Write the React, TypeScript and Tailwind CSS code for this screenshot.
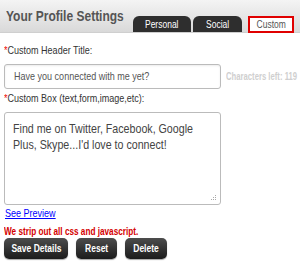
import React from "react";

function N({ children, className = "" }: { children: React.ReactNode; className?: string }) {
  return (
    <span className={"inline-block whitespace-nowrap origin-left scale-x-[0.82] " + className}>
      {children}
    </span>
  );
}

function Btn({ w, label }: { w: string; label: string }) {
  return (
    <div
      className={
        w +
        " h-[21px] rounded-[5px] bg-gradient-to-b from-[#4d4d4d] to-[#1c1c1c] text-white text-[10px] font-bold flex items-center justify-center shadow-[0_1px_1px_rgba(0,0,0,0.35)]"
      }
    >
      <span className="inline-block whitespace-nowrap scale-x-[0.85]">{label}</span>
    </div>
  );
}

export default function App() {
  const font = { fontFamily: '"Liberation Sans", Arial, sans-serif' };
  return (
    <div className="w-[300px] h-[266px] bg-white overflow-hidden" style={font}>
      <div className="h-[33px] bg-gradient-to-b from-[#f4f4f4] to-[#d9d9d9] border-b border-[#cfcfcf] flex items-end pl-[6px]">
        <div className="w-[127px] shrink-0 mb-[8px] leading-none">
          <span className="inline-block whitespace-nowrap origin-left scale-x-[0.8] text-[15px] font-bold text-[#555]">
            Your Profile Settings
          </span>
        </div>
        <div className="flex items-end gap-[2px]">
          <div className="w-[58px] h-[16px] bg-[#2e2e2e] rounded-t-[6px] text-white text-[10px] flex items-center justify-center">
            <span className="inline-block scale-x-[0.85]">Personal</span>
          </div>
          <div className="w-[49px] h-[16px] bg-[#2e2e2e] rounded-t-[6px] text-white text-[10px] flex items-center justify-center">
            <span className="inline-block scale-x-[0.85]">Social</span>
          </div>
          <div className="ml-[4px] w-[46px] h-[17px] -mb-[1px] bg-white border-[2px] border-[#e00000] text-[#555] text-[10px] flex items-center justify-center">
            <span className="inline-block scale-x-[0.85]">Custom</span>
          </div>
        </div>
      </div>

      <div className="pl-[4px]">
        <div className="mt-[11px] text-[11px] text-[#333] leading-[13px]">
          <N>
            <span className="text-[#e00]">*</span>Custom Header Title:
          </N>
        </div>
        <div className="mt-[7px] flex items-center">
          <div className="w-[217px] shrink-0 h-[25px] border border-[#bbb] rounded-[3px] shadow-[inset_0_1px_2px_rgba(0,0,0,0.08)] flex items-center pl-[9px] text-[11px] text-[#555]">
            <N>Have you connected with me yet?</N>
          </div>
          <div className="ml-[5px] shrink-0 text-[10px] font-bold text-[#cfcfcf]">
            <span className="inline-block whitespace-nowrap origin-left scale-x-[0.77]">Characters left: 119</span>
          </div>
        </div>
        <div className="mt-[3px] text-[11px] text-[#333] leading-[13px]">
          <N>
            <span className="text-[#e00]">*</span>Custom Box (text,form,image,etc):
          </N>
        </div>
        <div className="mt-[7px] w-[217px] h-[93px] border border-[#bbb] rounded-[3px] relative pt-[8px] pl-[8px] text-[13px] leading-[16px] text-[#444]">
          <div className="w-[240px] origin-left scale-x-[0.82]">
            Find me on Twitter, Facebook, Google Plus, Skype...I'd love to connect!
          </div>
          <svg className="absolute right-[3px] bottom-[3px]" width="6" height="6" viewBox="0 0 6 6">
            <rect x="4" y="0" width="1" height="1" fill="#aaa" />
            <rect x="2" y="2" width="1" height="1" fill="#aaa" />
            <rect x="4" y="2" width="1" height="1" fill="#aaa" />
            <rect x="0" y="4" width="1" height="1" fill="#aaa" />
            <rect x="2" y="4" width="1" height="1" fill="#aaa" />
            <rect x="4" y="4" width="1" height="1" fill="#aaa" />
          </svg>
        </div>
        <div className="mt-[2px] text-[11px] text-[#00f] leading-[13px] pl-[1px]">
          <N className="underline">See Preview</N>
        </div>
        <div className="mt-[6px] text-[10px] font-bold text-[#d40000] leading-[12px]">
          <N>We strip out all css and javascript.</N>
        </div>
        <div className="flex gap-[8px]">
          <Btn w="w-[64px]" label="Save Details" />
          <Btn w="w-[41px]" label="Reset" />
          <Btn w="w-[42px]" label="Delete" />
        </div>
      </div>
    </div>
  );
}
